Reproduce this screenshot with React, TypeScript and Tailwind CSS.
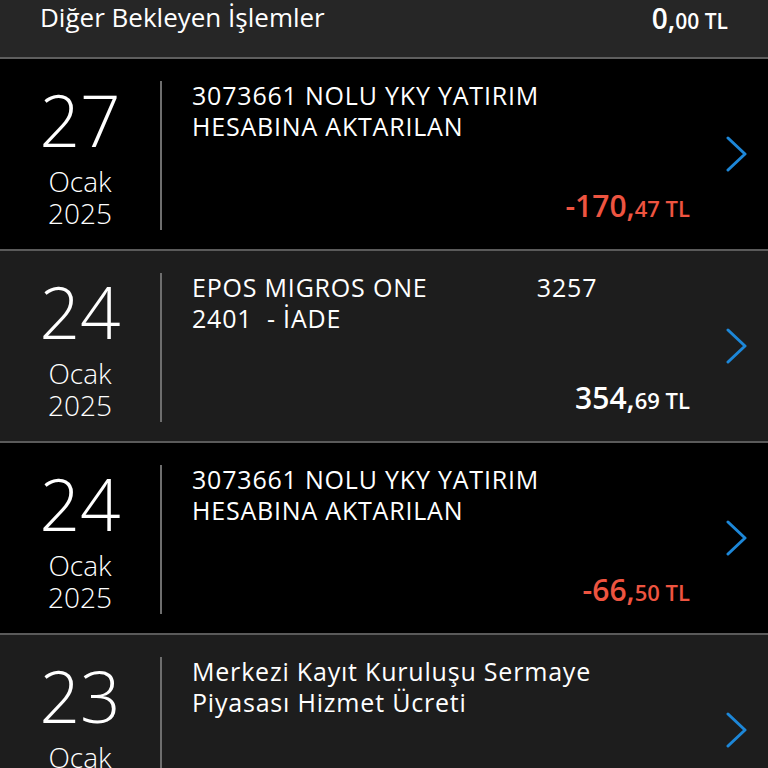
import React from "react"

type Tx = {
  day: string
  month: string
  year: string
  lines: string[]
  whole: string
  cents: string
  negative: boolean
}

const txs: Tx[] = [
  { day: "27", month: "Ocak", year: "2025", lines: ["3073661 NOLU YKY YATIRIM", "HESABINA AKTARILAN"], whole: "-170,", cents: "47", negative: true },
  { day: "24", month: "Ocak", year: "2025", lines: ["EPOS MIGROS ONE\u00a0\u00a0\u00a0\u00a0\u00a0\u00a0\u00a0\u00a0\u00a0\u00a0\u00a0\u00a0\u00a0\u00a0\u00a03257", "2401\u00a0\u00a0- İADE"], whole: "354,", cents: "69", negative: false },
  { day: "24", month: "Ocak", year: "2025", lines: ["3073661 NOLU YKY YATIRIM", "HESABINA AKTARILAN"], whole: "-66,", cents: "50", negative: true },
  { day: "23", month: "Ocak", year: "2025", lines: ["Merkezi Kayıt Kuruluşu Sermaye", "Piyasası Hizmet Ücreti"], whole: "-3,", cents: "75", negative: true },
]

const font = { fontFamily: '"Open Sans", "Noto Sans", sans-serif' }

function Chevron() {
  return (
    <svg width="24" height="36" viewBox="0 0 24 36" fill="none">
      <path d="M3 2 L20 18 L3 34" stroke="#1d87d8" strokeWidth="3" strokeLinecap="round" strokeLinejoin="round" />
    </svg>
  )
}

function Row({ tx, dark }: { tx: Tx; dark: boolean }) {
  return (
    <div className={`flex h-[192px] shrink-0 border-b-2 border-[#5a5a5a] ${dark ? "bg-black" : "bg-[#1d1d1d]"}`}>
      <div className="flex w-[160px] shrink-0 flex-col items-center pt-[24px] text-white">
        <span className="text-[71px] leading-[74px] font-light">{tx.day}</span>
        <span className="mt-[8px] text-[28px] leading-[32px] font-light">{tx.month}</span>
        <span className="text-[28px] leading-[32px] font-light">{tx.year}</span>
      </div>
      <div className="mt-[22px] mb-[19px] w-[2px] shrink-0 bg-[#6e6e6e]" />
      <div className="flex flex-1 flex-col pl-[30px] pt-[21px] pr-[10px]">
        {tx.lines.map((l, i) => (
          <div key={i} className="text-[25px] leading-[31px] tracking-[0.8px] text-white whitespace-pre">
            {l}
          </div>
        ))}
        <div className={`mt-auto mb-[20px] self-end font-semibold leading-[36px] ${tx.negative ? "text-[#ee5440]" : "text-white"}`}>
          <span className="text-[30px]">{tx.whole}</span>
          <span className="text-[22px]">{tx.cents} TL</span>
        </div>
      </div>
      <div className="flex w-[68px] shrink-0 items-center justify-center pl-[6px]">
        <Chevron />
      </div>
    </div>
  )
}

export default function App() {
  return (
    <div className="flex h-[768px] w-[768px] flex-col overflow-hidden bg-black" style={font}>
      <div className="flex h-[59px] shrink-0 items-start justify-between border-b-2 border-[#5e5e5e] bg-[#262626] pl-[40px] pr-[40px]">
        <span className="text-[26px] leading-[34px] text-white">Diğer Bekleyen İşlemler</span>
        <span className="font-semibold text-white leading-[36px]">
          <span className="text-[28px]">0,</span>
          <span className="text-[21px]">00 TL</span>
        </span>
      </div>
      {txs.map((tx, i) => (
        <Row key={i} tx={tx} dark={i % 2 === 0} />
      ))}
    </div>
  )
}
